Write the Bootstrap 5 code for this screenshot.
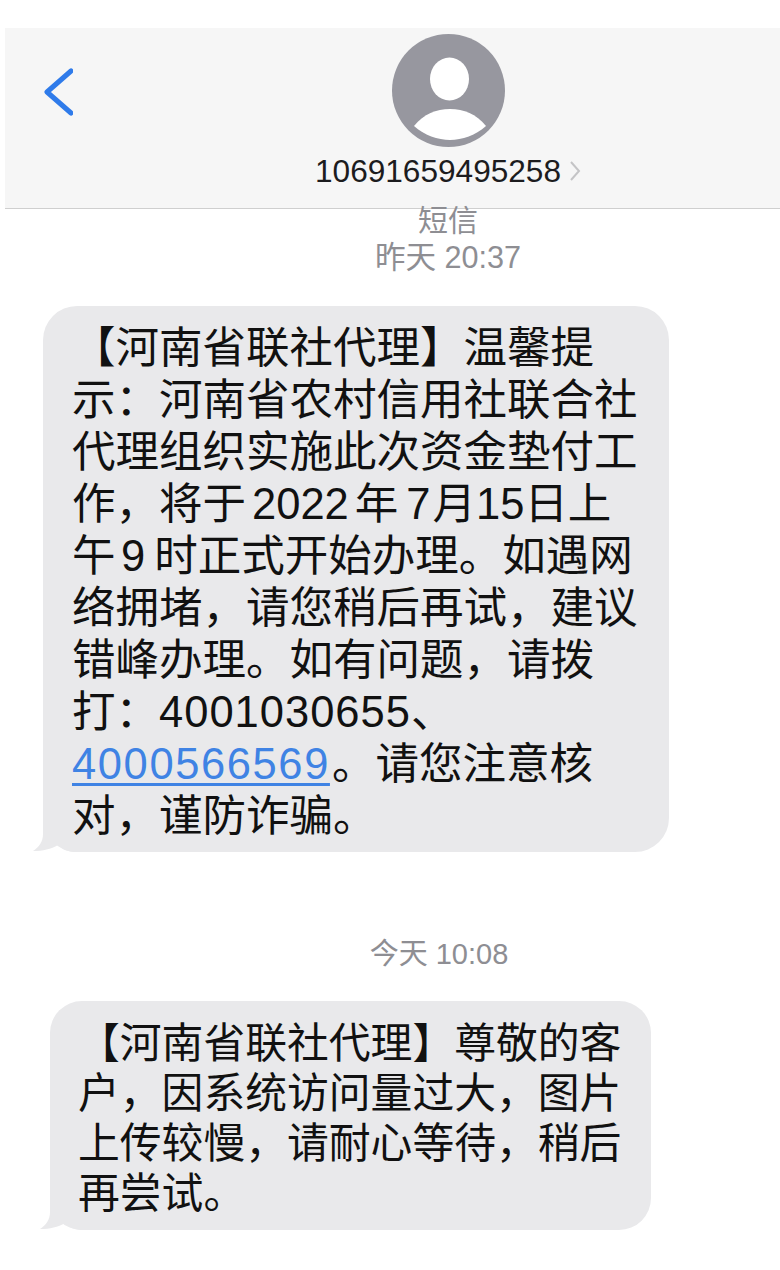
<!DOCTYPE html>
<html lang="zh-CN">
<head>
  <meta charset="UTF-8">
  <meta name="viewport" content="width=device-width, initial-scale=1">
  <title>短信</title>
  <link href="https://cdn.jsdelivr.net/npm/bootstrap@5.3.0/dist/css/bootstrap.min.css" rel="stylesheet">
  <style>
    body { background: #fff; color: #111; font-family: "Liberation Sans", "Noto Sans CJK SC", sans-serif; padding-top: 28px; width: 780px; height: 1270px; overflow: hidden; }
    .sms-head { height: 181px; margin-left: 5px; padding: 6px 0 0 39px; background: #f6f6f6; border-bottom: 1px solid #cfcfcf; }
    .sms-back { width: 29px; margin-top: 34px; margin-right: 242px; }
    .sms-contact { width: 267px; }
    .sms-number { font-size: 31.6px; line-height: 36px; margin-top: 6px; color: #1c1c1e; }
    .sms-stamp { color: #8e8e93; text-align: center; padding-left: 116px; }
    .stamp-kind { font-size: 30px; line-height: 24px; }
    .stamp-day { font-size: 30.6px; line-height: 48px; }
    .stamp-today { font-size: 29px; line-height: 40px; margin-top: 82px; padding-left: 98px; }
    .sms-bubble { position: relative; background: #e9e9eb; white-space: nowrap; }
    .bubble-one { width: 626px; margin: 25px 0 0 43px; padding: 16px 0 10px 29px; border-radius: 34px; font-size: 43.5px; line-height: 52px; }
    .bubble-two { width: 601px; margin: 27px 0 0 50px; padding: 18px 0 11px 28px; border-radius: 32px; font-size: 41.8px; line-height: 50px; }
    .sms-text { position: relative; z-index: 1; }
    .sms-tail { position: absolute; left: -10px; bottom: 0; }
    .sms-link { color: #3f83e4; letter-spacing: 1.6px; margin-right: 2px; text-decoration: underline; text-decoration-thickness: 3px; text-underline-offset: 4px; }
    .sms-phone { letter-spacing: 1px; }
    .gap-year { margin: 0 6px; }
    .gap-seven { margin: 0 2px 0 8px; }
    .gap-nine { margin: 0 9px 0 5.5px; }
  </style>
</head>
<body>
  <!-- Header -->
  <div class="sms-head d-flex align-items-start">
    <svg class="sms-back flex-shrink-0" width="29" height="48" viewBox="0 0 29 48">
      <polyline points="27,3 3,24 27,45" fill="none" stroke="#2f7bea" stroke-width="5" stroke-linecap="round" stroke-linejoin="round"/>
    </svg>
    <div class="sms-contact d-flex flex-column">
      <svg class="align-self-start ms-auto me-auto" width="113" height="113" viewBox="0 0 113 113">
        <circle cx="56.5" cy="56.5" r="56.5" fill="#97979f"/>
        <ellipse cx="57.5" cy="45" rx="19.5" ry="21.5" fill="#fff"/>
        <path d="M22 92C32 80 44 75 58 75C72 75 84 80 94 92C84 101 70 106 58 106C46 106 32 101 22 92Z" fill="#fff"/>
      </svg>
      <div class="sms-number d-flex align-items-center gap-2">
        <span>10691659495258</span>
        <svg width="12" height="24" viewBox="0 0 12 24"><polyline points="2,3 10,12 2,21" fill="none" stroke="#c4c4c6" stroke-width="2"/></svg>
      </div>
    </div>
  </div>

  <div class="sms-stamp">
    <div class="stamp-kind">短信</div>
    <div class="stamp-day">昨天 20:37</div>
  </div>

  <div class="sms-bubble bubble-one">
    <div class="sms-text">
      【河南省联社代理】温馨提<br>
      示&#65306;河南省农村信用社联合社<br>
      代理组织实施此次资金垫付工<br>
      作&#65292;将于<span class="gap-year">2022</span>年<span class="gap-seven">7</span>月<span>15</span>日上<br>
      午<span class="gap-nine">9</span>时正式开始办理。如遇网<br>
      络拥堵&#65292;请您稍后再试&#65292;建议<br>
      错峰办理。如有问题&#65292;请拨<br>
      打&#65306;<span class="sms-phone">4001030655</span>、<br>
      <a class="sms-link" href="#">4000566569</a>。请您注意核<br>
      对&#65292;谨防诈骗。
    </div>
    <svg class="sms-tail" width="47" height="38" viewBox="0 0 47 38"><path d="M10 0H47V38H42C36 38 30 36 25 31C18 35 10 37 0 37C6 33 10 28 10 20Z" fill="#e9e9eb"/></svg>
  </div>

  <div class="sms-stamp stamp-today">今天 10:08</div>

  <div class="sms-bubble bubble-two">
    <div class="sms-text">
      【河南省联社代理】尊敬的客<br>
      户&#65292;因系统访问量过大&#65292;图片<br>
      上传较慢&#65292;请耐心等待&#65292;稍后<br>
      再尝试。
    </div>
    <svg class="sms-tail" width="47" height="38" viewBox="0 0 47 38"><path d="M10 0H47V38H42C36 38 30 36 25 31C18 35 10 37 0 37C6 33 10 28 10 20Z" fill="#e9e9eb"/></svg>
  </div>

  <script src="https://cdn.jsdelivr.net/npm/bootstrap@5.3.0/dist/js/bootstrap.bundle.min.js"></script>
</body>
</html>
